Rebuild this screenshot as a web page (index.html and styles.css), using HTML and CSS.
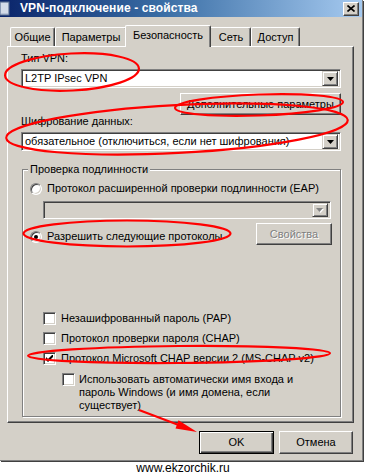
FILE: index.html
```html
<!DOCTYPE html>
<html>
<head>
<meta charset="utf-8">
<link rel="stylesheet" href="styles.css">
</head>
<body>
<div class="window">
  <div class="titlebar">
    <span class="app-icon"><svg width="11" height="15" viewBox="0 0 11 15"><rect x="0" y="1" width="9" height="13" fill="#b8c4d8"/><path d="M1 3h7M1 5h7M1 7h7M1 9h7M1 11h7" stroke="#eef2f8" stroke-width="1"/><rect x="0" y="1" width="9" height="13" fill="none" stroke="#5a6e90" stroke-width="1"/></svg></span>
    <span class="title">VPN-подключение - свойства</span>
    <span class="close"><svg width="8" height="7" viewBox="0 0 8 7"><path d="M0.5 0.5L7.5 6.5M7.5 0.5L0.5 6.5" stroke="#000" stroke-width="1.6"/></svg></span>
  </div>
  <div class="tabs">
    <div class="tab w1">Общие</div>
    <div class="tab w2">Параметры</div>
    <div class="tab sel">Безопасность</div>
    <div class="tab w4">Сеть</div>
    <div class="tab w5">Доступ</div>
  </div>
  <div class="panel">
    <div class="label first">Тип VPN:</div>
    <div class="combo"><span class="combo-text">L2TP IPsec VPN</span><span class="drop"><svg width="7" height="4" viewBox="0 0 7 4"><path d="M0 0h7L3.5 4z" fill="#000"/></svg></span></div>
    <div class="row-right"><button class="btn adv">Дополнительные параметры</button></div>
    <div class="label">Шифрование данных:</div>
    <div class="combo"><span class="combo-text">обязательное (отключиться, если нет шифрования)</span><span class="drop"><svg width="7" height="4" viewBox="0 0 7 4"><path d="M0 0h7L3.5 4z" fill="#000"/></svg></span></div>
    <fieldset class="group">
      <legend>Проверка подлинности</legend>
      <div class="opt eap"><span class="radio"></span><span>Протокол расширенной проверки подлинности (EAP)</span></div>
      <div class="combo disabled sub"><span class="combo-text"></span><span class="drop"><svg width="8" height="5" viewBox="0 0 8 5"><path d="M1 1h7L4.5 5z" fill="#fff"/><path d="M0 0h7L3.5 4z" fill="#808080"/></svg></span></div>
      <div class="proto-row">
        <div class="opt allow"><span class="radio on"></span><span>Разрешить следующие протоколы</span></div>
        <button class="btn disabled props">Свойства</button>
      </div>
      <div class="checks">
        <div class="opt chk"><span class="check"></span><span>Незашифрованный пароль (PAP)</span></div>
        <div class="opt chk"><span class="check"></span><span>Протокол проверки пароля (CHAP)</span></div>
        <div class="opt chk"><span class="check"><svg width="7" height="7" viewBox="0 0 7 7"><path d="M0 2v3l2 2 5-5V-1L2 4z" fill="#000"/></svg></span><span>Протокол Microsoft CHAP версии 2 (MS-CHAP v2)</span></div>
        <div class="opt chk auto"><span class="check"></span><span>Использовать автоматически имя входа и<br>пароль Windows (и имя домена, если<br>существует)</span></div>
      </div>
    </fieldset>
  </div>
  <div class="footer">
    <button class="btn default">OK</button>
    <button class="btn">Отмена</button>
  </div>
</div>
<div class="site">www.ekzorchik.ru</div>
<svg class="annot" width="366" height="475" viewBox="0 0 366 475">
  <g fill="none" stroke="#f00" stroke-width="2.2">
    <ellipse cx="72" cy="72" rx="67" ry="18.5" transform="rotate(-3 72 72)"/>
    <ellipse cx="259" cy="105" rx="84" ry="10.5" transform="rotate(-2 259 105)"/>
    <ellipse cx="177" cy="129" rx="171" ry="24" transform="rotate(-3 177 129)"/>
    <ellipse cx="127" cy="233.5" rx="103.5" ry="13"/>
    <ellipse cx="179" cy="354.5" rx="151" ry="8.5" transform="rotate(-0.5 179 354.5)"/>
    <path d="M139 410L180 425.5"/>
  </g>
  <path d="M197 432L175.5 428.5L178.5 420.2z" fill="#f00"/>
</svg>
</body>
</html>
```
FILE: styles.css
```css
* { box-sizing: border-box; }
html, body { margin: 0; padding: 0; }
body {
  position: relative;
  width: 366px;
  height: 475px;
  overflow: hidden;
  background: #fff;
  font-family: "Liberation Sans", Arial, sans-serif;
  font-size: 11px;
  line-height: 13px;
  color: #000;
}
.window {
  width: 363px;
  height: 461px;
  background: #d4d0c8;
  border-right: 1px solid #808080;
  border-bottom: 1px solid #808080;
  box-shadow: 1px 1px 0 #404040;
  display: flex;
  flex-direction: column;
}
.titlebar {
  height: 17px;
  display: flex;
  align-items: center;
  background: linear-gradient(to right, #0a246a 0%, #3a6ea5 45%, #a6caf0 100%);
}
.app-icon { width: 11px; height: 15px; display: flex; margin-right: 9px; }
.title {
  color: #fff;
  font-weight: bold;
  font-size: 12px;
  letter-spacing: 0.1px;
}
.close {
  margin-left: auto;
  margin-right: 3px;
  width: 16px;
  height: 14px;
  background: #d4d0c8;
  border-top: 1px solid #fff;
  border-left: 1px solid #fff;
  border-right: 1px solid #404040;
  border-bottom: 1px solid #404040;
  box-shadow: inset -1px -1px 0 #808080;
  display: flex;
  align-items: center;
  justify-content: center;
  padding-bottom: 1px;
}
.tabs {
  display: flex;
  align-items: flex-end;
  height: 21px;
  margin-top: 8px;
  padding-left: 10px;
}
.tab {
  height: 19px;
  border-top: 1px solid #fff;
  border-left: 1px solid #fff;
  border-right: 1px solid #404040;
  border-radius: 2px 2px 0 0;
  box-shadow: inset -1px 0 0 #808080;
  display: flex;
  align-items: center;
  justify-content: center;
  padding-top: 1px;
}
.w1 { width: 45px; }
.w2 { width: 72px; margin-right: -2px; }
.w4 { width: 42px; margin-left: -2px; padding-left: 2px; }
.w5 { width: 49px; }
.tab.sel {
  position: relative;
  z-index: 2;
  width: 86px;
  height: 22px;
  margin-bottom: -1px;
  background: #d4d0c8;
  padding-top: 0;
  padding-bottom: 3px;
}
.panel {
  width: 347px;
  height: 377px;
  margin-left: 7px;
  border-top: 1px solid #fff;
  border-left: 1px solid #fff;
  border-right: 1px solid #404040;
  border-bottom: 1px solid #404040;
  box-shadow: inset -1px -1px 0 #808080;
  padding: 0 12px 0 13px;
  display: flex;
  flex-direction: column;
}
.label { height: 13px; }
.label.first { margin-top: 5px; }
.combo {
  margin-top: 4px;
  height: 19px;
  background: #fff;
  border-top: 1px solid #808080;
  border-left: 1px solid #808080;
  border-right: 1px solid #fff;
  border-bottom: 1px solid #fff;
  box-shadow: inset 1px 1px 0 #404040, inset -1px -1px 0 #d4d0c8;
  display: flex;
  align-items: center;
  padding: 2px 2px 2px 3px;
}
.combo-text { flex: 1; white-space: nowrap; }
.drop {
  width: 16px;
  height: 15px;
  flex: none;
  background: #d4d0c8;
  border-top: 1px solid #d4d0c8;
  border-left: 1px solid #d4d0c8;
  border-right: 1px solid #404040;
  border-bottom: 1px solid #404040;
  box-shadow: inset 1px 1px 0 #fff, inset -1px -1px 0 #808080;
  display: flex;
  align-items: center;
  justify-content: center;
}
.drop svg { display: block; }
.row-right { display: flex; justify-content: flex-end; margin-top: 5px; }
.btn {
  font-family: inherit;
  font-size: 11px;
  line-height: 13px;
  color: #000;
  background: #d4d0c8;
  border-top: 1px solid #fff;
  border-left: 1px solid #fff;
  border-right: 1px solid #404040;
  border-bottom: 1px solid #404040;
  box-shadow: inset -1px -1px 0 #808080;
  border-radius: 0;
  padding: 0;
  margin: 0;
  height: 22px;
  display: flex;
  align-items: center;
  justify-content: center;
}
.btn.adv { width: 161px; }
.group {
  margin: 12px 0 0 1px;
  width: 319px;
  padding: 0 8px 4px 7px;
  border: 1px solid #808080;
  box-shadow: inset 1px 1px 0 #fff, 1px 1px 0 #fff;
  min-width: 0;
}
.group legend {
  padding: 0 2px;
  margin-left: -2px;
  line-height: 13px;
  background: #d4d0c8;
}
.opt { display: flex; align-items: center; height: 13px; white-space: nowrap; }
.eap { margin-top: 6px; }
.radio {
  width: 12px;
  height: 12px;
  flex: none;
  margin-right: 5px;
  border-radius: 50%;
  background: #fff;
  border: 1px solid;
  border-color: #808080 #fff #fff #808080;
  box-shadow: inset 1px 1px 0 #404040, inset -1px -1px 0 #d4d0c8;
  display: flex;
  align-items: center;
  justify-content: center;
}
.radio.on::after {
  content: "";
  width: 4px;
  height: 4px;
  border-radius: 50%;
  background: #000;
}
.combo.sub {
  margin-top: 6px;
  margin-left: 13px;
  width: 288px;
  height: 18px;
  background: #d4d0c8;
  padding: 2px;
}
.combo.sub .drop { height: 14px; }
.proto-row {
  display: flex;
  justify-content: space-between;
  margin-top: 4px;
  height: 22px;
}
.allow { margin-top: 7px; }
.btn.props { width: 76px; }
.btn.disabled { color: #808080; text-shadow: 1px 1px 0 #fff; }
.checks { margin-top: 67px; margin-left: 13px; display: flex; flex-direction: column; gap: 7px; }
.check {
  width: 13px;
  height: 13px;
  flex: none;
  margin-right: 5px;
  background: #fff;
  border: 1px solid;
  border-color: #808080 #fff #fff #808080;
  box-shadow: inset 1px 1px 0 #404040, inset -1px -1px 0 #d4d0c8;
  display: flex;
  align-items: center;
  justify-content: center;
}
.check svg { display: block; }
.chk.auto {
  margin-top: 1px;
  margin-left: 19px;
  height: auto;
  align-items: flex-start;
}
.chk.auto .check { margin-right: 4px; }
.footer {
  display: flex;
  justify-content: flex-end;
  gap: 5px;
  margin-top: 8px;
  padding-right: 9px;
}
.footer .btn { width: 74px; height: 23px; }
.footer .btn.default {
  width: 75px;
  border: 1px solid #000;
  box-shadow: inset 1px 1px 0 #fff, inset -1px -1px 0 #404040, inset -2px -2px 0 #808080;
}
.site {
  width: 366px;
  text-align: center;
  font-size: 12px;
  line-height: 14px;
}
.annot {
  position: absolute;
  left: 0;
  top: 0;
  pointer-events: none;
}
```
